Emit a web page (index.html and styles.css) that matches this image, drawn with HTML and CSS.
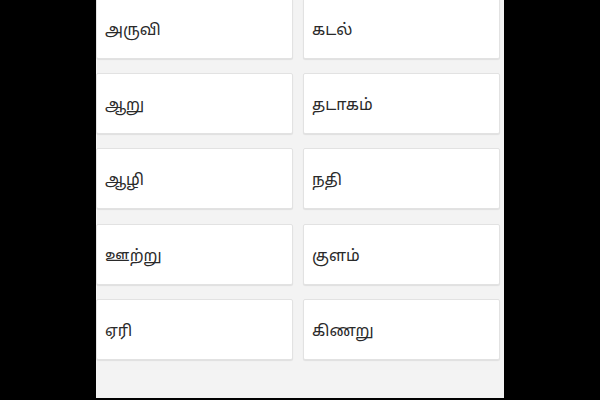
FILE: index.html
```html
<!DOCTYPE html>
<html lang="ta">
<head>
    <meta charset="UTF-8">
    <meta name="viewport" content="width=device-width, initial-scale=1.0">
    <title>நீர்நிலைகள்</title>
    <link rel="stylesheet" href="styles.css">
</head>
<body>
    <div class="page">
        <div class="word-grid">
            <div class="word-card">அருவி</div>
            <div class="word-card">கடல்</div>
            <div class="word-card">ஆறு</div>
            <div class="word-card">தடாகம்</div>
            <div class="word-card">ஆழி</div>
            <div class="word-card">நதி</div>
            <div class="word-card">ஊற்று</div>
            <div class="word-card">குளம்</div>
            <div class="word-card">ஏரி</div>
            <div class="word-card">கிணறு</div>
        </div>
    </div>
</body>
</html>
```

FILE: styles.css
```css
* {
    margin: 0;
    padding: 0;
    box-sizing: border-box;
}

html, body {
    height: 100%;
}

body {
    background: #000;
    font-family: "Noto Sans Tamil", "Noto Sans", sans-serif;
    color: #2a2a2a;
    overflow: hidden;
}

.page {
    width: 408px;
    height: 100%;
    margin: 0 auto;
    background: #f3f3f3;
    padding: 0 4px 0 0;
}

.word-grid {
    display: grid;
    grid-template-columns: 1fr 1fr;
    column-gap: 10px;
    row-gap: 14.33px;
    margin-top: -2.3px;
}

.word-card {
    height: 61px;
    background: #fff;
    border: 1px solid #e2e2e2;
    border-radius: 2px;
    box-shadow: 0 1px 1px rgba(0, 0, 0, 0.08);
    padding: 5px 8px 0;
    display: flex;
    align-items: center;
    font-size: 16px;
}
```
